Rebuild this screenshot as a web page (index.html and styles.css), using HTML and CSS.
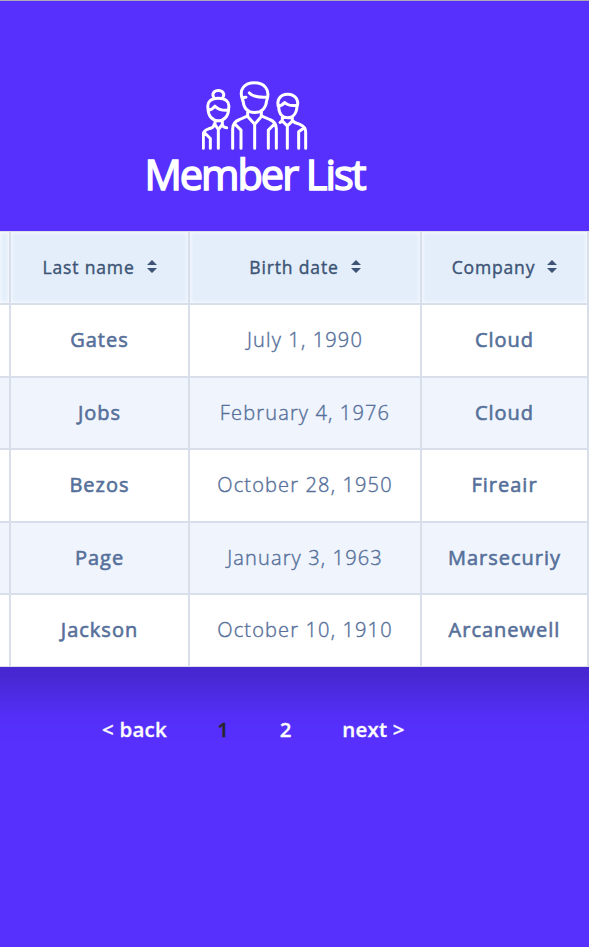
FILE: index.html
```
<!DOCTYPE html>
<html lang="en">
<head>
<meta charset="utf-8">
<title>Member List</title>
<link rel="stylesheet" href="styles.css">
</head>
<body>
<header class="heading">
  <svg class="people" viewBox="36 32 318 206" fill="none" stroke="#fff" stroke-linecap="round" stroke-linejoin="round">
    <path d="M71 80C65 70 72 60 85 60S105 70 99 80M54 113C50 92 65 83 85 83S120 92 116 113C116 138 101 151 85 151S54 138 54 113ZM55 119Q67 118 75 107Q88 121 115 119M75 150V162L85 177L97 162V150M72 162Q73 171 56 175Q41 180 40 190V233M97 162Q99 171 110 172M43 186L61 204V233M85 178V233"/>
    <path d="M158 88C145 57 164 37 193 37S241 56 231 88M158 91Q157 79 168 80M159 90C161 116 175 126 194 126S228 115 230 90M178 67Q190 82 230 80M173 124V138L194 161L214 138V124M173 136L149 147Q128 155 128 175V233M214 136L239 147Q259 155 259 175V233M133 159L153 179V233M255 159L235 179V233M194 162V233"/>
    <path d="M267 112C258 91 269 71 293 71S329 91 320 112M264 106Q276 106 284 96Q296 108 322 104M266 109C267 133 280 142 293 142S319 132 321 109M277 140V152L292 166L307 152V140M277 151L270 156M307 150Q313 157 328 161Q347 169 347 184V233M343 172L326 184V233M292 167V233"/>
  </svg>
  <h1 class="title">Member List</h1>
</header>
<div class="table" role="table">
  <div class="row head" role="row">
    <div class="cell"></div>
    <div class="cell"><span>Last name</span><svg class="sort" viewBox="0 0 10 13"><path d="M0 5L5 0L10 5ZM0 8H10L5 13Z"/></svg></div>
    <div class="cell"><span>Birth date</span><svg class="sort" viewBox="0 0 10 13"><path d="M0 5L5 0L10 5ZM0 8H10L5 13Z"/></svg></div>
    <div class="cell"><span>Company</span><svg class="sort" viewBox="0 0 10 13"><path d="M0 5L5 0L10 5ZM0 8H10L5 13Z"/></svg></div>
    <div class="cell"></div>
  </div>
  <div class="row" role="row"><div class="cell"></div><div class="cell">Gates</div><div class="cell date">July 1, 1990</div><div class="cell">Cloud</div><div class="cell"></div></div>
  <div class="row" role="row"><div class="cell"></div><div class="cell">Jobs</div><div class="cell date">February 4, 1976</div><div class="cell">Cloud</div><div class="cell"></div></div>
  <div class="row" role="row"><div class="cell"></div><div class="cell">Bezos</div><div class="cell date">October 28, 1950</div><div class="cell">Fireair</div><div class="cell"></div></div>
  <div class="row" role="row"><div class="cell"></div><div class="cell">Page</div><div class="cell date">January 3, 1963</div><div class="cell">Marsecuriy</div><div class="cell"></div></div>
  <div class="row" role="row"><div class="cell"></div><div class="cell">Jackson</div><div class="cell date">October 10, 1910</div><div class="cell">Arcanewell</div><div class="cell"></div></div>
</div>
<nav class="pages"><a>&lt; back</a><a class="current">1</a><a>2</a><a>next &gt;</a></nav>
</body>
</html>
```
FILE: styles.css
```
* { box-sizing: border-box; }
body {
  margin: 0;
  height: 947px;
  overflow: hidden;
  background: #5730fe;
  border-top: 1px solid #aaa9b4;
  font-family: "Open Sans", "Noto Sans", sans-serif;
}
.heading {
  width: 509px;
  height: 230px;
  padding-top: 80px;
  display: flex;
  flex-direction: column;
  align-items: center;
}
.people { width: 106px; height: 69px; flex: none; stroke-width: 9px; }
.title {
  margin: -1px 0 0;
  color: #fff;
  font-size: 41.5px;
  line-height: 50px;
  font-weight: 400;
  -webkit-text-stroke: 1.5px currentColor;
  letter-spacing: -2px;
  white-space: nowrap;
}
.table {
  background: #fff;
  box-shadow: 0 -30px 40px 60px rgba(0, 0, 0, .2);
  clip-path: inset(0 0 -80px 0);
  border-top: 1px solid #d9dfea;
  display: grid;
  grid-template-rows: 73px 73px 72px 73px 72px 72px;
}
.row {
  display: grid;
  grid-template-columns: 11px 179px 232px 167px 20px;
}
.cell {
  display: flex;
  align-items: center;
  justify-content: center;
  padding-bottom: 2px;
  border-right: 2px solid #d9dfea;
  border-bottom: 2px solid #d9dfea;
  color: #56709a;
  font-size: 20px;
  font-weight: 400;
  -webkit-text-stroke: .6px currentColor;
  letter-spacing: 1px;
  white-space: nowrap;
}
.row:nth-child(odd) .cell { background: #f0f5fd; }
.row:nth-child(even) .cell { background: #fff; }
.row.head .cell {
  background: #e4eefb;
  box-shadow: inset 0 0 4px #fff;
  color: #3d5475;
  font-size: 17.5px;
  letter-spacing: .85px;
  -webkit-text-stroke-width: .4px;
}
.row:last-child .cell { border-bottom-width: 1px; }
.row .cell.date { font-weight: 300; letter-spacing: 1.15px; -webkit-text-stroke-width: .4px; }
.sort { width: 10px; height: 13px; margin-left: 12px; fill: #3d5475; }
.pages {
  margin: 47px 0 0 102px;
  display: flex;
  gap: 50.5px;
  color: #fff;
  font-size: 20.5px;
  line-height: 30px;
  font-weight: 600;
  letter-spacing: .2px;
  -webkit-text-stroke: .3px currentColor;
}
.current { color: #282828; }
```
